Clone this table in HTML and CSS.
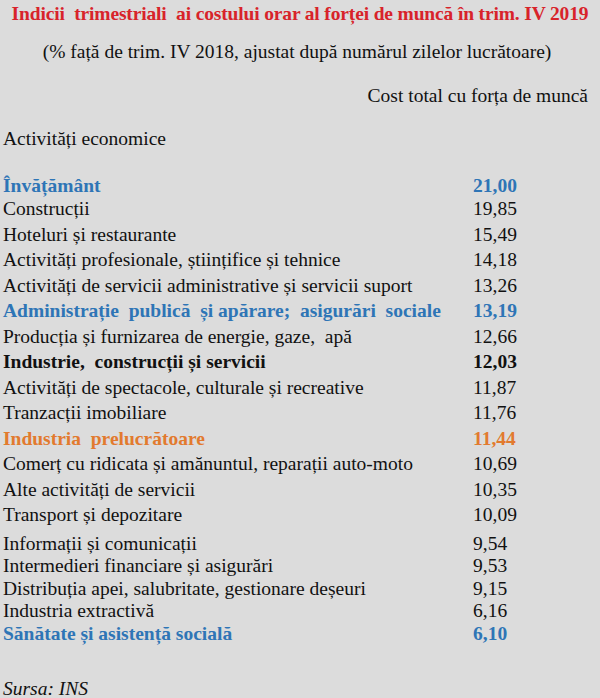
FILE: index.html
```html
<!DOCTYPE html>
<html lang="ro">
<head>
<meta charset="utf-8">
<link rel="stylesheet" href="styles.css">
</head>
<body>
<div class="page">
  <h1 class="title">Indicii&nbsp; trimestriali&nbsp; ai costului orar al forței de muncă în trim. IV 2019</h1>
  <p class="subtitle">(% față de trim. IV 2018, ajustat după numărul zilelor lucrătoare)</p>
  <p class="colhead">Cost total cu forța de muncă</p>
  <p class="section">Activități economice</p>
  <div class="table">
    <div class="row first blue bold"><span>Învățământ</span><span>21,00</span></div>
    <div class="row"><span>Construcții</span><span>19,85</span></div>
    <div class="row"><span>Hoteluri și restaurante</span><span>15,49</span></div>
    <div class="row"><span>Activități profesionale, științifice și tehnice</span><span>14,18</span></div>
    <div class="row"><span>Activități de servicii administrative și servicii suport</span><span>13,26</span></div>
    <div class="row blue bold"><span>Administrație&nbsp; publică&nbsp; și apărare;&nbsp; asigurări&nbsp; sociale</span><span>13,19</span></div>
    <div class="row"><span>Producția și furnizarea de energie, gaze,&nbsp; apă</span><span>12,66</span></div>
    <div class="row bold"><span>Industrie,&nbsp; construcții și servicii</span><span>12,03</span></div>
    <div class="row"><span>Activități de spectacole, culturale și recreative</span><span>11,87</span></div>
    <div class="row"><span>Tranzacții imobiliare</span><span>11,76</span></div>
    <div class="row orange bold"><span>Industria&nbsp; prelucrătoare</span><span>11,44</span></div>
    <div class="row"><span>Comerț cu ridicata și amănuntul, reparații auto-moto</span><span>10,69</span></div>
    <div class="row"><span>Alte activități de servicii</span><span>10,35</span></div>
    <div class="row"><span>Transport și depozitare</span><span>10,09</span></div>
    <div class="row tight gap"><span>Informații și comunicații</span><span>9,54</span></div>
    <div class="row tight"><span>Intermedieri financiare și asigurări</span><span>9,53</span></div>
    <div class="row tight"><span>Distribuția apei, salubritate, gestionare deșeuri</span><span>9,15</span></div>
    <div class="row tight"><span>Industria extractivă</span><span>6,16</span></div>
    <div class="row tight blue bold"><span>Sănătate și asistență socială</span><span>6,10</span></div>
  </div>
  <p class="source">Sursa: INS</p>
</div>
</body>
</html>
```

FILE: styles.css
```css
html, body {
  margin: 0;
  padding: 0;
  background: #dcdcdc;
}
body {
  font-family: "Liberation Serif", "Times New Roman", "DejaVu Serif", serif;
  font-size: 19.5px;
  color: #111;
}
.page {
  width: 600px;
  height: 698px;
  padding-top: 3px;
  box-sizing: border-box;
  overflow: hidden;
}
.title {
  margin: 0;
  font-size: 19.5px;
  line-height: 22px;
  font-weight: bold;
  color: #d8232a;
  text-align: center;
  letter-spacing: -0.15px;
  white-space: nowrap;
}
.subtitle {
  margin: 16px 0 0;
  line-height: 22px;
  text-align: center;
  padding-right: 6px;
}
.colhead {
  margin: 22px 0 0;
  line-height: 22px;
  text-align: right;
  padding-right: 12px;
}
.section {
  margin: 21px 0 0 3px;
  line-height: 22px;
}
.table {
  margin-top: 25px;
  padding-left: 3px;
}
.row {
  display: grid;
  grid-template-columns: 470px auto;
  height: 25.5px;
  line-height: 25.5px;
  white-space: nowrap;
}
.row.first {
  height: 21px;
  line-height: 21px;
}
.row.tight {
  height: 22.5px;
  line-height: 22.5px;
}
.row.gap {
  margin-top: 5px;
}
.bold {
  font-weight: bold;
}
.blue {
  color: #2e75b6;
}
.orange {
  color: #e27a2e;
}
.source {
  margin: 35px 0 0 3px;
  line-height: 18px;
  font-style: italic;
}
```
